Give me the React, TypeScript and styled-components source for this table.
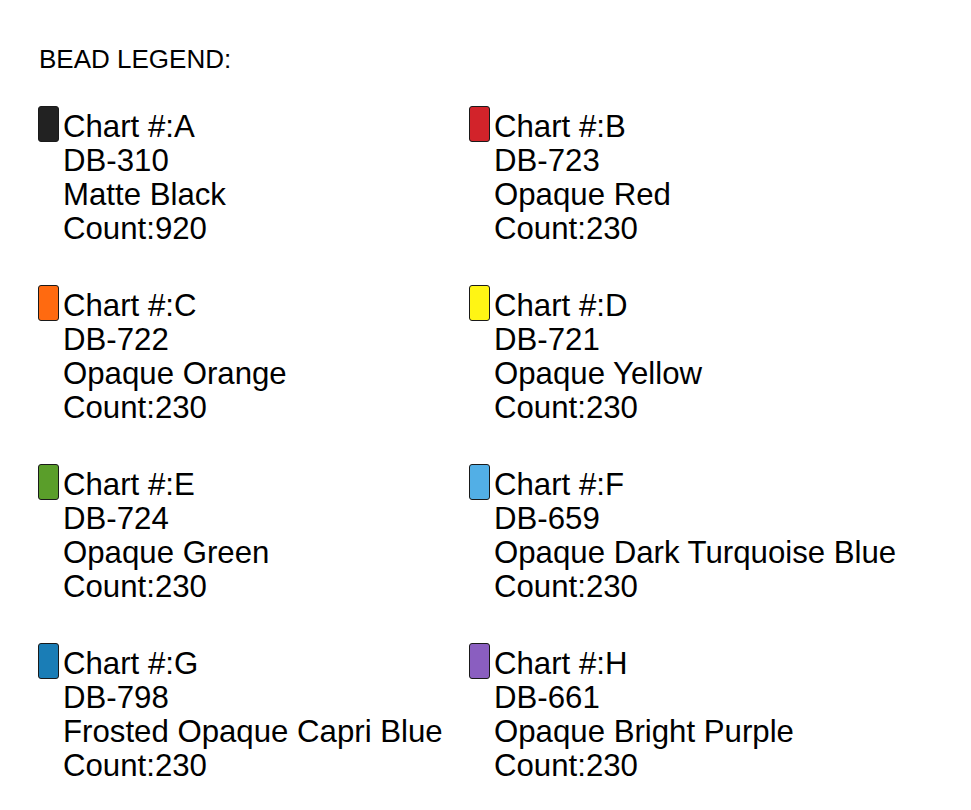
import React from "react";
import styled, { createGlobalStyle } from "styled-components";

const Global = createGlobalStyle`
  html, body { margin: 0; padding: 0; background: #ffffff; }
  body { font-family: "Liberation Sans", Arial, sans-serif; color: #000; }
`;

const Page = styled.div`
  padding: 45px 0 0 39px;
  width: 971px;
  box-sizing: border-box;
`;

const Title = styled.div`
  font-size: 26px;
  line-height: 28px;
  margin-bottom: 37px;
`;

const Grid = styled.div`
  display: grid;
  grid-template-columns: 431px 431px;
  row-gap: 43px;
  margin-left: -1px;
`;

const Item = styled.div`
  display: flex;
  align-items: flex-start;
`;

const Swatch = styled.div<{ $color: string }>`
  width: 21px;
  height: 36px;
  box-sizing: border-box;
  margin-top: -4px;
  margin-right: 4px;
  border-radius: 3px;
  border: 1px solid #1a1a1a;
  background: ${(p) => p.$color};
  flex-shrink: 0;
`;

const Lines = styled.div`
  font-size: 31.2px;
  line-height: 34px;
  white-space: nowrap;
`;

const Line = styled.div``;

const beads = [
  { chart: "A", code: "DB-310", name: "Matte Black", count: 920, color: "#222222" },
  { chart: "B", code: "DB-723", name: "Opaque Red", count: 230, color: "#d2232a" },
  { chart: "C", code: "DB-722", name: "Opaque Orange", count: 230, color: "#ff6a10" },
  { chart: "D", code: "DB-721", name: "Opaque Yellow", count: 230, color: "#fff514" },
  { chart: "E", code: "DB-724", name: "Opaque Green", count: 230, color: "#5a9e2a" },
  { chart: "F", code: "DB-659", name: "Opaque Dark Turquoise Blue", count: 230, color: "#52afe6" },
  { chart: "G", code: "DB-798", name: "Frosted Opaque Capri Blue", count: 230, color: "#1a7db6" },
  { chart: "H", code: "DB-661", name: "Opaque Bright Purple", count: 230, color: "#8a5ec0" },
];

export default function App() {
  return (
    <Page>
      <Global />
      <Title>BEAD LEGEND:</Title>
      <Grid>
        {beads.map((b) => (
          <Item key={b.chart}>
            <Swatch $color={b.color} />
            <Lines>
              <Line>Chart #:{b.chart}</Line>
              <Line>{b.code}</Line>
              <Line>{b.name}</Line>
              <Line>Count:{b.count}</Line>
            </Lines>
          </Item>
        ))}
      </Grid>
    </Page>
  );
}
